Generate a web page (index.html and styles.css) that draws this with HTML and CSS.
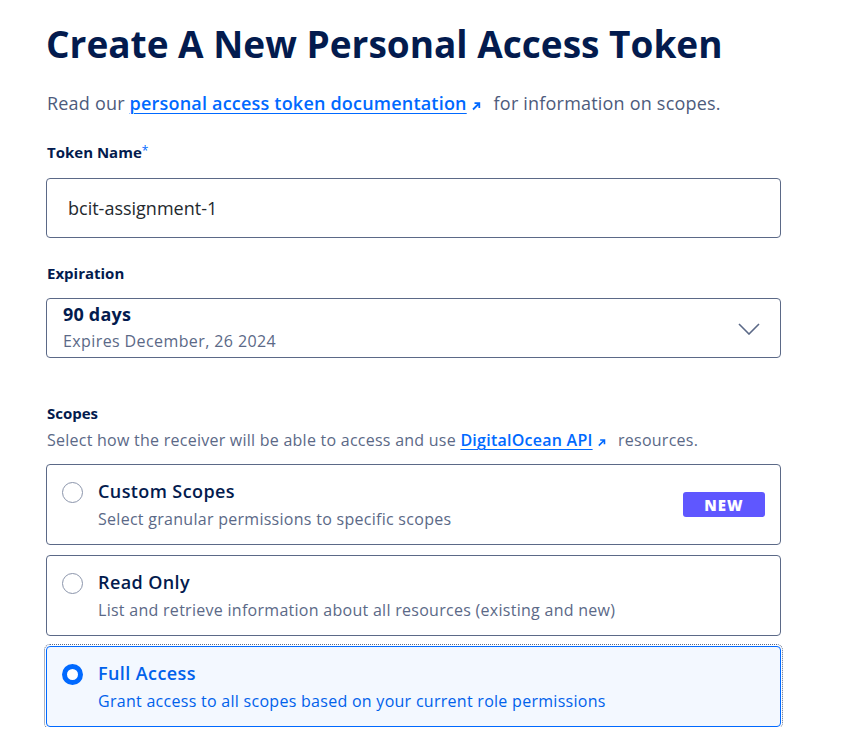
FILE: index.html
```html
<!DOCTYPE html>
<html lang="en">
<head>
<meta charset="utf-8">
<title>Create A New Personal Access Token</title>
<link rel="stylesheet" href="styles.css">
</head>
<body>
<main class="page">
  <h1 class="title">Create A New Personal Access Token</h1>
  <p class="lead">Read our <a class="link" href="#">personal access token documentation<svg class="ext" viewBox="0 0 10 10" width="10" height="10"><path d="M2 8.5 L8 2.5 M3.5 2.2 H8.3 V7" fill="none" stroke="currentColor" stroke-width="1.8"/></svg></a> for information on scopes.</p>

  <label class="label">Token Name<span class="req">*</span></label>
  <div class="input">bcit-assignment-1</div>

  <label class="label label-exp">Expiration</label>
  <div class="select">
    <div class="select-text">
      <div class="select-main">90 days</div>
      <div class="select-sub">Expires December, 26 2024</div>
    </div>
    <svg class="chev" viewBox="0 0 22 12" width="22" height="12"><path d="M1 1 L11 11 L21 1" fill="none" stroke="#5b6987" stroke-width="1.6"/></svg>
  </div>

  <label class="label label-scopes">Scopes</label>
  <p class="help">Select how the receiver will be able to access and use <a class="link" href="#">DigitalOcean API<svg class="ext" viewBox="0 0 10 10" width="9" height="9"><path d="M2 8.5 L8 2.5 M3.5 2.2 H8.3 V7" fill="none" stroke="currentColor" stroke-width="1.8"/></svg></a> resources.</p>

  <div class="options">
    <div class="option">
      <span class="radio"></span>
      <div class="opt-text">
        <div class="opt-title">Custom Scopes</div>
        <div class="opt-desc">Select granular permissions to specific scopes</div>
      </div>
      <span class="badge">NEW</span>
    </div>
    <div class="option">
      <span class="radio"></span>
      <div class="opt-text">
        <div class="opt-title">Read Only</div>
        <div class="opt-desc">List and retrieve information about all resources (existing and new)</div>
      </div>
    </div>
    <div class="option option-active">
      <span class="radio radio-on"></span>
      <div class="opt-text">
        <div class="opt-title">Full Access</div>
        <div class="opt-desc">Grant access to all scopes based on your current role permissions</div>
      </div>
    </div>
  </div>
</main>
</body>
</html>
```

FILE: styles.css
```css
* { box-sizing: border-box; }
html, body { margin: 0; padding: 0; background: #fff; }
body {
  font-family: "Open Sans", Lato, Arial, sans-serif;
  color: #031b4e;
}
.page {
  width: 735px;
  margin-left: 46px;
  padding-top: 20px;
}
.title {
  margin: 0;
  font-size: 37px;
  line-height: 48px;
  font-weight: 700;
  color: #031b4e;
  letter-spacing: 0;
}
.lead {
  margin: 23px 0 0 1px;
  font-size: 18px;
  line-height: 24px;
  color: #4d5b7c;
  letter-spacing: 0.2px;
}
.link {
  color: #0069ff;
  font-weight: 600;
  text-decoration: underline;
  text-underline-offset: 3px;
  text-decoration-thickness: 1px;
}
.ext { margin: 0 8px 0 4px; vertical-align: -1px; }
.label {
  display: block;
  margin: 26px 0 0 1px;
  font-size: 15px;
  line-height: 20px;
  font-weight: 700;
  color: #031b4e;
}
.req { color: #0069ff; font-weight: 400; vertical-align: 3px; font-size: 12px; }
.input {
  margin-top: 16px;
  height: 60px;
  border: 1px solid #5b6987;
  border-radius: 4px;
  padding: 0 21px;
  display: flex;
  align-items: center;
  font-size: 18px;
  color: #24292e;
}
.label-exp { margin-top: 25px; }
.select {
  margin-top: 15px;
  height: 60px;
  border: 1px solid #5b6987;
  border-radius: 4px;
  padding: 0 20px 0 16px;
  display: flex;
  align-items: center;
  justify-content: space-between;
}
.select-text { display: flex; flex-direction: column; }
.select-main { font-size: 18px; font-weight: 700; line-height: 24px; margin-top: -4px; letter-spacing: 0.2px; }
.select-sub { font-size: 16px; color: #5b6987; line-height: 20px; margin-top: 5px; letter-spacing: 0.4px; }
.chev { margin-top: 2px; }
.label-scopes { margin-top: 45px; }
.help {
  margin: 7px 0 0 1px;
  font-size: 16px;
  line-height: 20px;
  color: #5b6987;
  letter-spacing: 0.25px;
}
.options {
  margin-top: 14px;
  display: flex;
  flex-direction: column;
  gap: 10px;
}
.option {
  height: 81px;
  border: 1px solid #5b6987;
  border-radius: 4px;
  padding: 0 15px;
  display: flex;
  align-items: center;
  gap: 15px;
  background: #fff;
}
.radio {
  flex: none;
  width: 21px;
  height: 21px;
  border: 1px solid #8b95ab;
  border-radius: 50%;
  margin-top: -25px;
}
.radio-on {
  border: 5px solid #0069ff;
  background: #fff;
}
.opt-text { flex: 1; }
.opt-title { font-size: 18px; font-weight: 600; line-height: 24px; color: #031b4e; margin-top: -2px; letter-spacing: 0.4px; }
.opt-desc { font-size: 16px; line-height: 20px; color: #5b6987; margin-top: 6px; letter-spacing: 0.28px; }
.badge {
  flex: none;
  align-self: flex-start;
  margin-top: 27px;
  width: 82px;
  height: 25px;
  border-radius: 3px;
  background: #5f57ff;
  color: #fff;
  font-size: 15px;
  font-weight: 800;
  letter-spacing: 1px;
  display: flex;
  align-items: center;
  justify-content: center;
}
.option-active {
  background: #f3f8ff;
  border-color: #0069ff;
  outline: 1px dotted #5b6987;
  outline-offset: 1px;
}
.option-active .opt-title,
.option-active .opt-desc { color: #0061eb; }
```
